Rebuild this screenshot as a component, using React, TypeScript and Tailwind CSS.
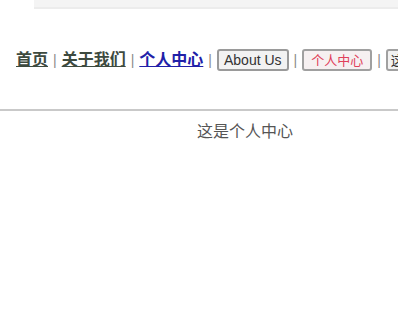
import React from 'react';

const Sep: React.FC = () => <span className="text-[#8a8a8a] mx-[5px] text-[14px]">|</span>;

export default function App() {
  return (
    <div className="w-[398px] h-[325px] bg-white overflow-hidden font-['Liberation_Sans','Noto_Sans_CJK_SC',sans-serif]">
      <div className="h-[9px] bg-[#f4f4f4] border-b-2 border-[#ececec] ml-[34px]" />
      <div className="flex items-center whitespace-nowrap pl-[16px] pt-[38px] h-[64px] text-[16px]">
        <a className="text-[#3d4a3f] underline font-semibold">首页</a>
        <Sep />
        <a className="text-[#3d4a3f] underline font-semibold">关于我们</a>
        <Sep />
        <a className="text-[#2020a8] underline font-bold">个人中心</a>
        <Sep />
        <button className="h-[22px] px-[5px] border-2 border-[#9a9a9a] rounded-[3px] bg-[#f2f2f2] text-[14px] leading-none text-[#333]">About Us</button>
        <Sep />
        <button className="h-[22px] px-[7px] border-2 border-[#a0a0a0] rounded-[3px] bg-[#f6f0f1] text-[13px] leading-none text-[#e0405a]">个人中心</button>
        <Sep />
        <button className="h-[22px] px-[3px] border-2 border-[#a0a0a0] rounded-[3px] bg-[#f2f2f2] text-[13px] leading-none text-[#333]">这是</button>
      </div>
      <div className="mt-[36px] h-[2px] bg-[#c9c9c9]" />
      <div className="pl-[197px] pt-[9px] text-[16px] text-[#555]">这是个人中心</div>
    </div>
  );
}
